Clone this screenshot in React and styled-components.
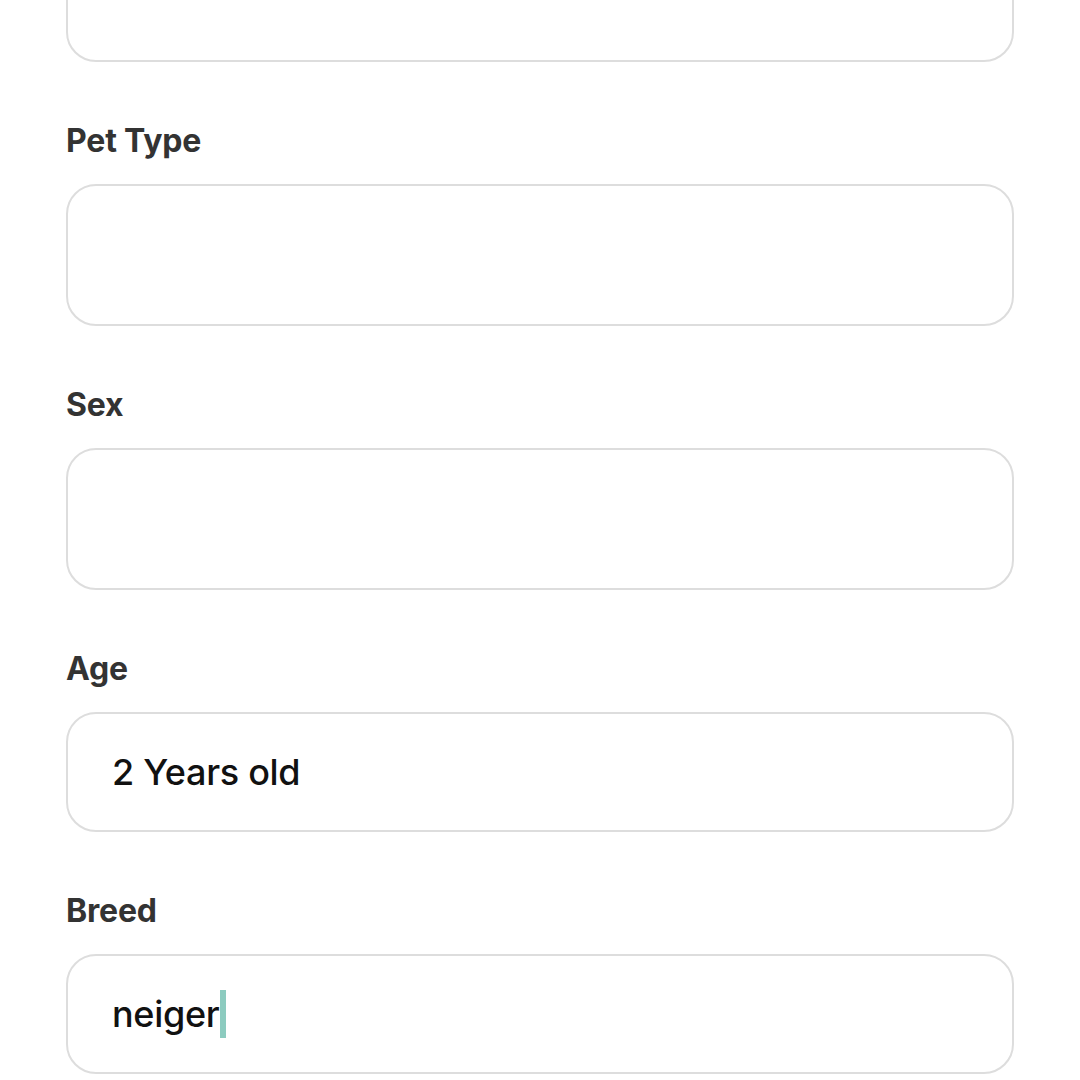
import React from 'react'
import styled, { createGlobalStyle } from 'styled-components'

const GlobalStyle = createGlobalStyle`
	html, body {
		margin: 0;
		padding: 0;
		background: #ffffff;
	}
	body {
		font-family: Inter, "Noto Sans", sans-serif;
		overflow: hidden;
	}
`

const Page = styled.div`
	width: 1080px;
	height: 1080px;
	overflow: hidden;
	padding: 0 66px;
	box-sizing: border-box;
`

const Form = styled.form`
	display: flex;
	flex-direction: column;
	gap: 58px;
	margin-top: -80px;
`

const Field = styled.div`
	display: flex;
	flex-direction: column;
	gap: 22px;
`

const Label = styled.label`
	font-size: 32px;
	line-height: 42px;
	font-weight: 700;
	color: #333333;
	letter-spacing: -0.2px;
`

const Box = styled.div`
	height: ${p => p.$tall ? 142 : 120}px;
	box-sizing: border-box;
	border: 2px solid #dddddd;
	border-radius: 30px;
	padding: 0 44px;
	display: flex;
	align-items: center;
	font-size: 36px;
	font-weight: 500;
	letter-spacing: -0.3px;
	color: #111111;
`

const Caret = styled.span`
	display: inline-block;
	width: 6px;
	height: 48px;
	margin-left: 1px;
	background: #8ccbbf;
`

const fields = [
	{ label: null, value: '', tall: true },
	{ label: 'Pet Type', value: '', tall: true },
	{ label: 'Sex', value: '', tall: true },
	{ label: 'Age', value: '2 Years old' },
	{ label: 'Breed', value: 'neiger', focused: true }
]

export default function App() {
	return (
		<Page>
			<GlobalStyle />
			<Form onSubmit={e => e.preventDefault()}>
				{fields.map((f, i) => (
					<Field key={i}>
						{f.label && <Label>{f.label}</Label>}
						<Box $tall={f.tall}>
							{f.value}
							{f.focused && <Caret />}
						</Box>
					</Field>
				))}
			</Form>
		</Page>
	)
}
